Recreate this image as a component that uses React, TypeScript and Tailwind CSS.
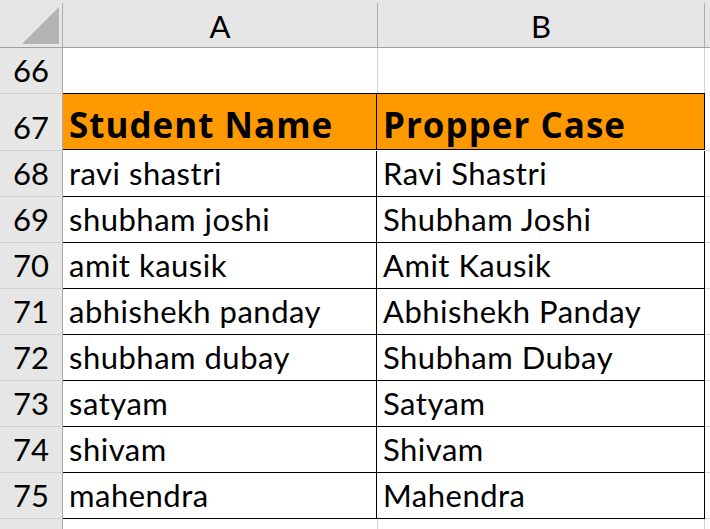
import React from "react";

const rows = [
    { n: 68, a: "ravi shastri", b: "Ravi Shastri" },
    { n: 69, a: "shubham joshi", b: "Shubham Joshi" },
    { n: 70, a: "amit kausik", b: "Amit Kausik" },
    { n: 71, a: "abhishekh panday", b: "Abhishekh Panday" },
    { n: 72, a: "shubham dubay", b: "Shubham Dubay" },
    { n: 73, a: "satyam", b: "Satyam" },
    { n: 74, a: "shivam", b: "Shivam" },
    { n: 75, a: "mahendra", b: "Mahendra" },
];

function RowHead({ n, h }: { n: number | string; h: string }) {
    return (
        <div
            className={`${h} w-[63px] shrink-0 bg-[#e6e6e6] border-r border-r-[#ababab] border-b border-b-[#d0d0d0] flex items-end justify-center pb-[7px] text-[31px] leading-none`}
        >
            {n}
        </div>
    );
}

export default function App() {
    return (
        <div
            className="w-[710px] h-[529px] overflow-hidden bg-white text-black"
            style={{ fontFamily: "Lato, 'Liberation Sans', sans-serif" }}
        >
            {/* column header */}
            <div className="flex h-[48px] bg-[#e6e6e6] border-b border-[#9f9f9f]">
                <div className="w-[63px] shrink-0 pt-[3px] flex">
                    <div className="flex-1 border-r border-[#ababab] relative">
                        <svg
                            width="63"
                            height="47"
                            className="absolute left-0 top-[-3px]"
                        >
                            <polygon points="59,7 59,44 22,44" fill="#b4b4b4" />
                        </svg>
                    </div>
                </div>
                <div className="w-[315px] shrink-0 pt-[3px] flex">
                    <div className="flex-1 border-r border-[#ababab] flex items-center justify-center pt-[3px] text-[31px] leading-none">
                        A
                    </div>
                </div>
                <div className="w-[327px] shrink-0 pt-[3px] flex">
                    <div className="flex-1 border-r border-[#ababab] flex items-center justify-center pt-[3px] text-[31px] leading-none">
                        B
                    </div>
                </div>
                <div className="flex-1" />
            </div>

            {/* row 66 */}
            <div className="flex">
                <RowHead n={66} h="h-[46px]" />
                <div className="w-[315px] shrink-0 h-[46px] border-r border-[#d4d4d4]" />
                <div className="w-[327px] shrink-0 h-[46px] border-r border-[#d4d4d4]" />
                <div className="flex-1 h-[46px]" />
            </div>

            {/* row 67 header */}
            <div className="flex">
                <RowHead n={67} h="h-[57px]" />
                <div
                    className="w-[642px] shrink-0 flex border-t border-b border-r border-black bg-[#ff9900] h-[57px] -mt-px text-[35px] tracking-[1px] font-bold leading-none"
                    style={{ fontFamily: "'Open Sans', Lato, sans-serif" }}
                >
                    <div className="w-[314px] shrink-0 border-r border-black flex items-end pl-[6px] pb-[7px]">
                        Student Name
                    </div>
                    <div className="flex-1 flex items-end pl-[6px] pb-[7px]">
                        Propper Case
                    </div>
                </div>
                <div className="flex-1 border-b border-[#d4d4d4]" />
            </div>

            {rows.map((r) => (
                <div key={r.n} className="flex">
                    <RowHead n={r.n} h="h-[46px]" />
                    <div className="w-[642px] shrink-0 flex border-b border-r border-black h-[46px] text-[31px] tracking-[0.5px] leading-none">
                        <div className="w-[314px] shrink-0 border-r border-black flex items-end pl-[6px] pb-[7px]">
                            {r.a}
                        </div>
                        <div className="flex-1 flex items-end pl-[6px] pb-[7px]">
                            {r.b}
                        </div>
                    </div>
                    <div className="flex-1 border-b border-[#d4d4d4]" />
                </div>
            ))}

            {/* partial row 76 */}
            <div className="flex h-[20px]">
                <div className="w-[63px] shrink-0 bg-[#e6e6e6] border-r border-[#ababab]" />
                <div className="w-[315px] shrink-0 border-r border-[#d4d4d4]" />
                <div className="w-[327px] shrink-0 border-r border-[#d4d4d4]" />
            </div>
        </div>
    );
}
